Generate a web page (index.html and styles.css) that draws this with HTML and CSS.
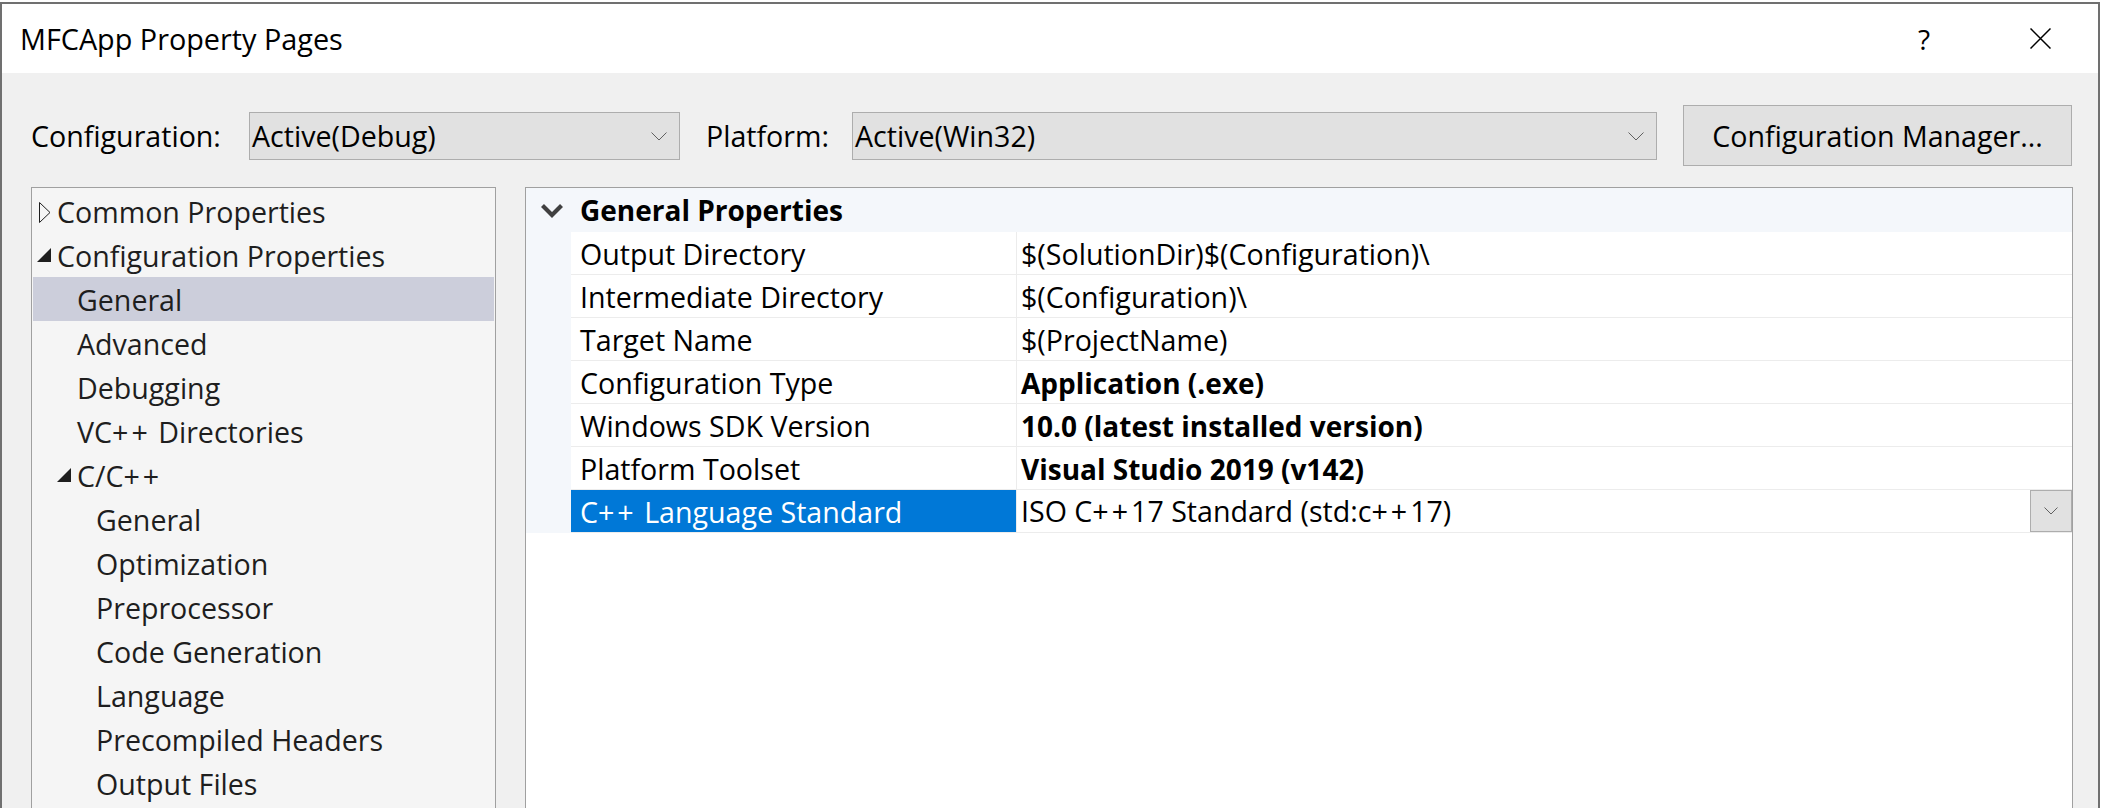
FILE: index.html
```html
<!DOCTYPE html>
<html lang="en">
<head>
<meta charset="utf-8">
<title>MFCApp Property Pages</title>
<link rel="stylesheet" href="styles.css">
</head>
<body>
<div class="window">
  <header class="titlebar">
    <div class="title">MFCApp Property Pages</div>
    <div class="tb-btn help">?</div>
    <div class="tb-btn close">
      <svg width="21" height="21" viewBox="0 0 21 21"><path d="M0.5 0.5 L20.5 20.5 M20.5 0.5 L0.5 20.5" stroke="#000" stroke-width="1.5" fill="none"/></svg>
    </div>
  </header>

  <div class="toolbar">
    <div class="tb-label cfg-label">Configuration:</div>
    <div class="combo cfg-combo">
      <span class="combo-text">Active(Debug)</span>
      <svg class="chev" width="16" height="9" viewBox="0 0 16 9"><polyline points="0.5,0.5 8,8 15.5,0.5" fill="none" stroke="#606060" stroke-width="1"/></svg>
    </div>
    <div class="tb-label plat-label">Platform:</div>
    <div class="combo plat-combo">
      <span class="combo-text">Active(Win32)</span>
      <svg class="chev" width="16" height="9" viewBox="0 0 16 9"><polyline points="0.5,0.5 8,8 15.5,0.5" fill="none" stroke="#606060" stroke-width="1"/></svg>
    </div>
    <div class="btn">Configuration Manager...</div>
  </div>

  <div class="main">
    <div class="tree">
      <div class="trow l0"><span class="tog"><svg class="tri-open" width="12" height="21" viewBox="0 0 12 21"><polygon points="0.5,0.5 11,10.5 0.5,20.5" fill="none" stroke="#1e1e1e" stroke-width="1"/></svg></span><span>Common Properties</span></div>
      <div class="trow l0"><span class="tog"><svg width="14" height="14" viewBox="0 0 14 14"><polygon points="14,0 14,14 0,14" fill="#1e1e1e"/></svg></span><span>Configuration Properties</span></div>
      <div class="trow l1 sel"><span class="tog"></span><span>General</span></div>
      <div class="trow l1"><span class="tog"></span><span>Advanced</span></div>
      <div class="trow l1"><span class="tog"></span><span>Debugging</span></div>
      <div class="trow l1"><span class="tog"></span><span>VC<span class="pp">++</span> Directories</span></div>
      <div class="trow l1"><span class="tog"><svg width="14" height="14" viewBox="0 0 14 14"><polygon points="14,0 14,14 0,14" fill="#1e1e1e"/></svg></span><span>C/C<span class="pp">++</span></span></div>
      <div class="trow l2"><span class="tog"></span><span>General</span></div>
      <div class="trow l2"><span class="tog"></span><span>Optimization</span></div>
      <div class="trow l2"><span class="tog"></span><span>Preprocessor</span></div>
      <div class="trow l2"><span class="tog"></span><span>Code Generation</span></div>
      <div class="trow l2"><span class="tog"></span><span>Language</span></div>
      <div class="trow l2"><span class="tog"></span><span>Precompiled Headers</span></div>
      <div class="trow l2"><span class="tog"></span><span>Output Files</span></div>
    </div>

    <div class="panel">
      <div class="phead">
        <svg class="pchev" width="24" height="15" viewBox="0 0 24 15"><polyline points="2.5,2.5 12,12 21.5,2.5" fill="none" stroke="#404040" stroke-width="4.2"/></svg>
        <span class="phead-text">General Properties</span>
      </div>
      <div class="prow"><div class="strip"></div><div class="pname">Output Directory</div><div class="pval">$(SolutionDir)$(Configuration)\</div></div>
      <div class="prow"><div class="strip"></div><div class="pname">Intermediate Directory</div><div class="pval">$(Configuration)\</div></div>
      <div class="prow"><div class="strip"></div><div class="pname">Target Name</div><div class="pval">$(ProjectName)</div></div>
      <div class="prow"><div class="strip"></div><div class="pname">Configuration Type</div><div class="pval bold">Application (.exe)</div></div>
      <div class="prow"><div class="strip"></div><div class="pname">Windows SDK Version</div><div class="pval bold">10.0 (latest installed version)</div></div>
      <div class="prow"><div class="strip"></div><div class="pname">Platform Toolset</div><div class="pval bold">Visual Studio 2019 (v142)</div></div>
      <div class="prow"><div class="strip"></div><div class="pname sel">C<span class="pp">++</span> Language Standard</div><div class="pval"><span class="pval-text">ISO C<span class="pp">++</span>17 Standard (std:c<span class="pp">++</span>17)</span><span class="pdrop"><svg width="14" height="8" viewBox="0 0 14 8"><polyline points="0.5,0.5 7,7 13.5,0.5" fill="none" stroke="#606060" stroke-width="1"/></svg></span></div></div>
    </div>
  </div>
</div>
</body>
</html>
```

FILE: styles.css
```css
html, body {
  margin: 0;
  padding: 0;
  background: #ffffff;
  overflow: hidden;
}

body {
  width: 2102px;
  height: 808px;
  font-family: "Open Sans", "Noto Sans", sans-serif;
  font-size: 28.6px;
  color: #000;
}

.pp {
  letter-spacing: 3px;
}

.window {
  margin-top: 2px;
  width: 2100px;
  height: 900px;
  box-sizing: border-box;
  border: 2px solid #707070;
  border-bottom: none;
  background: #f0f0f0;
  display: flex;
  flex-direction: column;
}

/* title bar */
.titlebar {
  flex: none;
  height: 69px;
  background: #ffffff;
  display: flex;
  align-items: center;
}

.title {
  flex: 1;
  padding-left: 18px;
  font-size: 28.8px;
}

.tb-btn {
  width: 116px;
  height: 100%;
  display: flex;
  align-items: center;
  justify-content: center;
}

.help {
  font-size: 28px;
}

/* toolbar */
.toolbar {
  flex: none;
  display: flex;
  align-items: center;
  height: 61px;
  padding: 32px 0 0 29px;
}

.tb-label {
  flex: none;
}

.cfg-label {
  width: 218px;
}

.plat-label {
  width: 146px;
  margin-left: 26px;
}

.combo {
  flex: none;
  box-sizing: border-box;
  height: 48px;
  border: 1px solid #adadad;
  background: #e1e1e1;
  display: flex;
  align-items: center;
  padding: 0 12px 0 2px;
}

.combo-text {
  flex: 1;
}

.chev {
  margin-top: 2px;
}

.cfg-combo {
  width: 431px;
}

.plat-combo {
  width: 805px;
}

.btn {
  flex: none;
  box-sizing: border-box;
  width: 389px;
  height: 61px;
  margin-left: 26px;
  border: 1px solid #adadad;
  background: #e1e1e1;
  display: flex;
  align-items: center;
  justify-content: center;
}

/* main area */
.main {
  flex: 1;
  display: flex;
  margin-top: 21px;
  padding-left: 29px;
}

.tree {
  flex: none;
  width: 465px;
  box-sizing: border-box;
  border: 1px solid #a0a0a0;
  border-bottom: none;
  background: #f5f5f5;
  padding-top: 1px;
  color: #1e1e1e;
}

.trow {
  height: 44px;
  display: flex;
  align-items: center;
  white-space: nowrap;
}

.trow.sel {
  background: #cccedb;
  margin: 0 1px;
}

.trow.sel .tog {
  width: 24px;
}

.l1 {
  padding-left: 20px;
}

.l2 {
  padding-left: 39px;
}

.tog {
  flex: none;
  width: 25px;
  box-sizing: border-box;
  padding-right: 6px;
  display: flex;
  justify-content: flex-end;
  align-items: center;
}

.tri-open {
  margin-top: 3px;
}

.panel {
  flex: none;
  width: 1548px;
  margin-left: 29px;
  box-sizing: border-box;
  border: 1px solid #a0a0a0;
  border-bottom: none;
  background: #ffffff;
}

.phead {
  height: 44px;
  background: #f4f7fb;
  display: flex;
  align-items: center;
  padding-left: 14px;
}

.pchev {
  flex: none;
}

.phead-text {
  margin-left: 16px;
  font-weight: 700;
  font-size: 28px;
}

.prow {
  display: flex;
  height: 43px;
}

.strip {
  flex: none;
  width: 45px;
  background: #f4f7fb;
}

.pname {
  flex: none;
  width: 446px;
  box-sizing: border-box;
  padding-left: 9px;
  padding-top: 2px;
  line-height: 40px;
  border-right: 1px solid #ececec;
  border-bottom: 1px solid #ececec;
  white-space: nowrap;
}

.pname.sel {
  background: #0078d7;
  color: #ffffff;
}

.pval {
  flex: 1;
  display: flex;
  padding-left: 4px;
  line-height: 42px;
  border-bottom: 1px solid #ececec;
  white-space: nowrap;
}

.pval-text,
.pval.bold,
.pval:not(:has(.pdrop)) {
  padding-top: 1px;
}

.pval.bold {
  font-weight: 700;
  font-size: 28px;
}

.pval-text {
  flex: 1;
  line-height: 40px;
}

.pdrop {
  flex: none;
  width: 42px;
  height: 42px;
  box-sizing: border-box;
  border: 1px solid #adadad;
  background: #e1e1e1;
  display: flex;
  align-items: center;
  justify-content: center;
}
```
